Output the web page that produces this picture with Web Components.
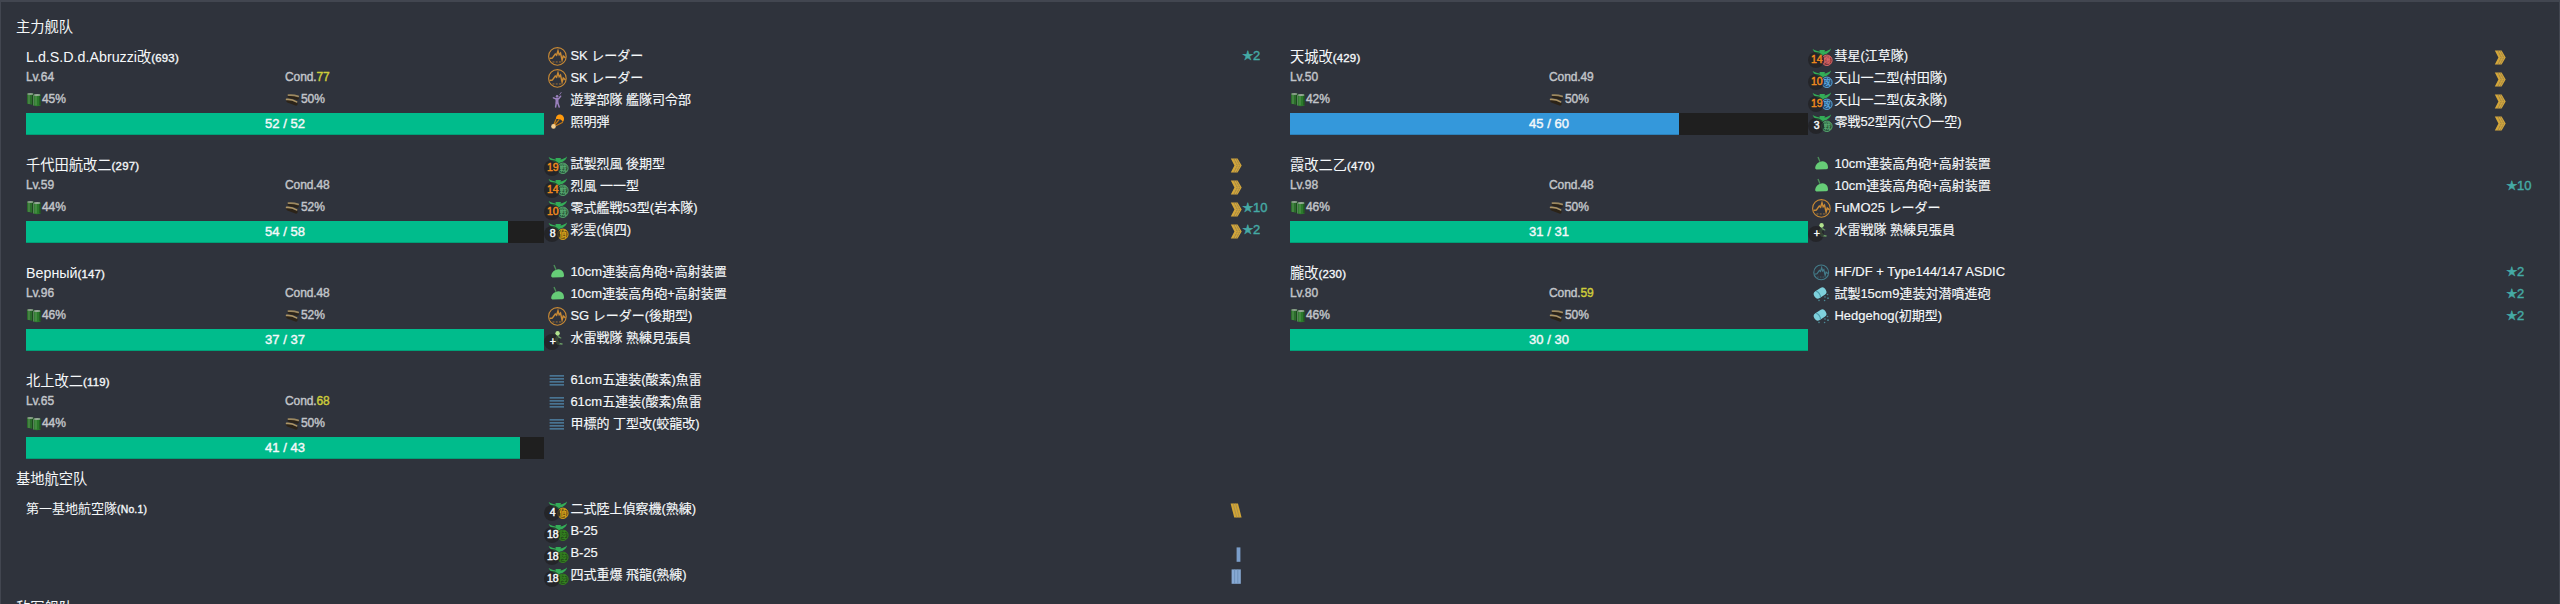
<!DOCTYPE html>
<html lang="ja">
<head>
<meta charset="utf-8">
<title>Fleet</title>
<style>
html,body{margin:0;height:604px;overflow:hidden;background:#2f333c}
body{font-family:"Liberation Sans","Noto Sans CJK JP",sans-serif;color:#f5f8fa}
</style>
</head>
<body>
<fleet-report></fleet-report>
<script>
const tpl = (html) => { const t = document.createElement('template'); t.innerHTML = html; return t; };
class Base extends HTMLElement {
  mount(html) {
    if (this.shadowRoot) return;
    this.attachShadow({ mode: 'open' }).appendChild(tpl(html).content.cloneNode(true));
  }
}

/* Equipment glyphs, drawn in a 26x22 box */
const radar = (c, cx, r) => `<g fill="none" stroke="${c}"><circle cx="${cx}" cy="11.4" r="${r}" stroke-width="1.1"/><g transform="translate(${cx} 11.3) scale(${r / 9})"><path d="M-8 2.2L-5.2 1.8L-2.2-2.4L-.8-1.2L.6-5.6L1.8-1.5L3.2-3.2L4.8 3.8L6-.2L8.3 1.6" stroke-width="1.5"/><path d="M-5 5.8h10" stroke-width="1" stroke-dasharray="2 1.3" opacity=".75"/></g></g>`;
const plane = `<path d="M4.6 4C7 5.7 10 6.4 12 6.5L11.4 5H17L16.4 6.5C18.6 6.2 21 5.2 23 3.4C22.5 6.6 19 9 16.2 9.5L14.3 11H13.5L12 9.5C8.4 9 5.6 6.6 4.6 4Z" fill="#33ad57"/>`;
const ring = (c, ch, f) => `<circle cx="18.9" cy="15.3" r="5.2" fill="${f}" stroke="${c}" stroke-width="1"/><text x="19" y="18.1" text-anchor="middle" font-size="7.5" font-weight="700" fill="${c}">${ch}</text>`;
const ICONS = {
  radar: radar('#c98a35', 13.4, 8.8),
  sonar: radar('#437c8a', 13.2, 7.4),
  fighter: plane + ring('#58a870', '戦', '#24503a'),
  bomber: plane + ring('#e0686a', '爆', '#6b3238'),
  torpedo: plane + ring('#5aa5dc', '攻', '#264c70'),
  recon: plane + ring('#d9a41b', '偵', '#6b5416'),
  land: plane + ring('#35851f', '陸', '#24501c'),
  commander: `<g stroke="#9a80bd" fill="none" stroke-linecap="round"><circle cx="13.1" cy="7.2" r="1.3" fill="#9a80bd" stroke="none"/><path d="M9.4 8.9L11.5 9.8H14.6L16.6 7.2" stroke-width="1.5"/><path d="M13 10V13.5" stroke-width="3"/><path d="M12.3 14L11.6 18M13.8 14L15.2 18" stroke-width="1.5"/><path d="M15.8 5.4L17.2 3.4" stroke-width=".8"/></g>`,
  flare: `<path d="M12 8.2C11.5 4.5 15 2.7 17.7 4C20.5 5.4 20.7 8.9 18.8 11.2C18.3 9.7 17 8.6 15.3 8.3C14 8 12.8 8 12 8.2Z" fill="#ff9a0d"/><path d="M12 8.2L9.7 14M15.3 8.3L10.6 14M18.8 11.2L11.5 15" stroke="#c57814" stroke-width="1.2"/><circle cx="9.5" cy="15.4" r="2.3" fill="#f5cf91"/>`,
  aagun: `<path d="M7.2 14.6C7.6 11.5 10.5 8.4 14.5 8.2C18.6 8.6 20.3 11.6 20 15.2C19.2 16.2 18 16.4 17 16.2L8.4 16.4C7.4 16.3 7.1 15.6 7.2 14.6Z" fill="#66cc77"/><path d="M12 8.8L10 4" stroke="#4d9159" stroke-width="1.3"/>`,
  torp: `<g stroke="#538bb0" stroke-width="1.4"><path d="M5.6 6.9H20M5.6 9.9H20M5.6 12.9H20M5.6 15.9H20"/></g>`,
  depth: `<g transform="rotate(-33 11.8 10)"><rect x="5.5" y="6.2" width="13" height="8" rx="3.5" fill="#7ed0dc"/><path d="M9.8 6.5C11.5 8 11.5 12.5 9.8 14" stroke="#4a99a8" fill="none"/></g><g fill="#4b8996"><circle cx="19.5" cy="11.5" r=".8"/><circle cx="17" cy="14" r=".8"/><circle cx="20" cy="15.2" r=".9"/><circle cx="16.6" cy="17.5" r=".8"/><circle cx="11" cy="17.4" r=".8"/></g>`,
  lookout: `<g fill="none" stroke="#6a9c65" stroke-linecap="round"><path d="M13.8 9.6L12 13.5L14.5 16.5" stroke-width="3.2"/><path d="M14.2 9.8L16.8 11" stroke-width="1.2"/><path d="M14.8 16.5L18 17" stroke-width="1.4"/></g><circle cx="13.6" cy="6.2" r="2.2" fill="#b2e28e"/>`
};
class EquipIcon extends Base {
  connectedCallback() {
    const k = this.getAttribute('kind'), n = this.getAttribute('count');
    const badge = n ? `<b class="${+n > 9 && this.hasAttribute('hot') ? 'hot' : ''}">${n}</b>` : '';
    this.mount(`<style>:host{display:block;position:relative;width:26px;height:22px;flex:none}
      svg{display:block;overflow:visible;font-family:"Noto Sans CJK JP"}
      b{position:absolute;left:0;top:7px;width:16px;height:16px;border-radius:8px;background:rgba(32,32,34,.72);color:#f5f8fa;font:400 10.5px/15px "Liberation Sans",sans-serif;text-align:center;text-indent:1.5px;-webkit-text-stroke:.45px}
      .hot{color:#f08a1d}</style><svg width="26" height="22" viewBox="0 0 26 22">${ICONS[k]}</svg>${badge}`);
  }
}
customElements.define('equip-icon', EquipIcon);

const ALV = {
  7: '<path d="M.8 .4H7.6L11.7 7.5L7.6 14.6H.8L4.4 7.5Z" fill="#d3a63a"/><g fill="none" stroke="#8d7a4b" stroke-width=".8"><path d="M3.9 .8L7.4 7.5L3.9 14.2M6.3 .8L9.7 7.5L6.3 14.2" stroke-dasharray="2 .6"/></g>',
  6: '<path d="M.6 .4H8L11.6 14.6H4.2Z" fill="#d3a635"/><path d="M3.2 .6L6.7 14.4M5.6 .6L9.2 14.4" stroke="#a58b4c" stroke-width=".8"/>',
  3: '<rect x="1.6" y=".4" width="9.2" height="14.4" fill="#87a9d3"/><path d="M4.6 .5V14.7M7.8 .5V14.7" stroke="#688bb5" stroke-width=".8"/>',
  1: '<rect x="6.6" y=".4" width="3.8" height="14.4" fill="#7a9dc9"/>'
};
class EquipRow extends Base {
  connectedCallback() {
    const a = (n) => this.getAttribute(n);
    this.mount(`<style>:host{display:flex;height:22px;align-items:flex-start}
      .n{flex:1;padding-left:.4px;font-size:13px;line-height:22px;white-space:nowrap;-webkit-text-stroke:.15px}
      .a{width:12px;height:15px;margin:4.5px .5px 0 0}
      .s{width:27.5px;font:400 13px/21px "Liberation Sans",sans-serif;color:#45aaa5;white-space:nowrap;-webkit-text-stroke:.4px}
      i{font:13px/1 "DejaVu Sans",sans-serif;margin:0 -.6px 0 -.6px}
      svg{display:block;overflow:visible}</style>
      <equip-icon kind="${a('kind')}" ${a('count') ? `count="${a('count')}"` : ''} ${this.hasAttribute('hot') ? 'hot' : ''}></equip-icon>
      <div class="n"><slot></slot></div>
      <div class="a">${a('alv') ? `<svg width="12" height="15" viewBox="0 0 12 15">${ALV[a('alv')]}</svg>` : ''}</div>
      <div class="s">${a('star') ? `<i>★</i>${a('star')}` : ''}</div>`);
  }
}
customElements.define('equip-row', EquipRow);

class HpBar extends Base {
  connectedCallback() {
    const n = +this.getAttribute('now'), m = +this.getAttribute('max'), p = n / m * 100;
    this.mount(`<style>:host{display:grid;height:22px;background:#1f1f1f;color:#f5f8fa}
      .f,.t{grid-area:1/1}
      .f{width:${p}%;background:${p > 75 ? '#00bc8c' : '#3498db'};box-shadow:inset 0 -1px rgba(0,0,0,.15)}
      .t{font-size:13px;line-height:21px;text-align:center;-webkit-text-stroke:.4px}</style>
      <div class="f"></div><div class="t">${n} / ${m}</div>`);
  }
}
customElements.define('hp-bar', HpBar);

class ShipStats extends Base {
  connectedCallback() {
    const a = (n) => this.getAttribute(n);
    this.mount(`<style>:host{display:grid;grid-template-columns:1fr 1fr;grid-auto-rows:22px;font-size:12px;line-height:22px;color:#c2c5ca;letter-spacing:-.1px;-webkit-text-stroke:.4px}
      div{display:flex;white-space:pre}b{font-weight:400;color:#cfcd3a}svg{display:block;margin:4px 1px 0 0}</style>
      <div>Lv.${a('lv')}</div><div>Cond.${+a('cond') > 49 ? `<b>${a('cond')}</b>` : a('cond')}</div>
      <div><svg width="15" height="15" viewBox="0 0 15 15"><path d="M1 1.5H7.6V13L1 11.8Z" fill="#2b6d2b"/><path d="M7.8 2.6H14.6V13.4Q11 14.8 7.8 13.8Z" fill="#2b7a2b"/><path d="M3 2.5V12M10 4V13.4" stroke="#5c9a58" stroke-width="1"/><path d="M6.6 3V13M14 4V13" stroke="#1c451f"/><path d="M7.7 3V13.6" stroke="#7da07d" stroke-width=".7"/><ellipse cx="4.3" cy="2" rx="3.1" ry="1" fill="#8d9f8d"/><ellipse cx="11.2" cy="3" rx="3.2" ry="1.1" fill="#98a998"/></svg>${a('fuel')}%</div>
      <div><svg width="15" height="15" viewBox="0 0 15 15"><g stroke-linecap="round"><path d="M4.3 4.3L12.3 6M3 9L11 12" stroke="#2b2318" stroke-width="3.4"/><path d="M3.4 3.2Q8 2.6 13.2 4.4" fill="none" stroke="#9c8860" stroke-width="1.7"/><path d="M1.6 7.4Q7 7 11.6 9.9" fill="none" stroke="#ad9565" stroke-width="1.7"/></g></svg>${a('ammo')}%</div>`);
  }
}
customElements.define('ship-stats', ShipStats);

class ShipCard extends Base {
  connectedCallback() {
    this.mount(`<style>:host{display:flex;box-sizing:border-box;width:1264px;height:108px;padding:0 10px}
      .i{width:518px;padding-top:2px}.e{flex:1}
      .n{height:19px;font-size:14.28px;line-height:21px;white-space:nowrap}
      .n span{font-size:11.4px;letter-spacing:.2px;-webkit-text-stroke:.35px}
      :host([base]) .i{padding-top:1px}
      :host([base]) .e{padding-top:1px}
      :host([base]) .n{font-size:13px;line-height:21px}
      :host([base]) .n span{font-size:10.4px}</style>
      <div class="i"><div class="n"><slot name="name"></slot><span>(<slot name="id"></slot>)</span></div><slot name="info"></slot></div>
      <div class="e"><slot></slot></div>`);
  }
}
customElements.define('ship-card', ShipCard);

class FleetSection extends Base {
  connectedCallback() {
    this.mount(`<style>:host{display:block;padding:0 16px}
      .h{font-size:14.28px;line-height:22px;height:22px;margin-bottom:7px}
      .g{display:grid;grid-template-columns:1264px 1264px}</style>
      <div class="h"><slot name="title"></slot></div><div class="g"><slot></slot></div>`);
  }
}
customElements.define('fleet-section', FleetSection);

const AA = 'aagun||||10cm連装高角砲+高射装置';
const fleet = [
  ['L.d.S.D.d.Abruzzi改', 693, 64, 77, 45, 50, 52, 52, ['radar||||SK レーダー|2', 'radar||||SK レーダー', 'commander||||遊撃部隊 艦隊司令部', 'flare||||照明弾']],
  ['天城改', 429, 50, 49, 42, 50, 45, 60, ['bomber|14|1|7|彗星(江草隊)', 'torpedo|10|1|7|天山一二型(村田隊)', 'torpedo|19|1|7|天山一二型(友永隊)', 'fighter|3||7|零戦52型丙(六〇一空)']],
  ['千代田航改二', 297, 59, 48, 44, 52, 54, 58, ['fighter|19|1|7|試製烈風 後期型', 'fighter|14|1|7|烈風 一一型', 'fighter|10|1|7|零式艦戦53型(岩本隊)|10', 'recon|8||7|彩雲(偵四)|2']],
  ['霞改二乙', 470, 98, 48, 46, 50, 31, 31, [AA, AA + '|10', 'radar||||FuMO25 レーダー', 'lookout|+|||水雷戦隊 熟練見張員']],
  ['Верный', 147, 96, 48, 46, 52, 37, 37, [AA, AA, 'radar||||SG レーダー(後期型)', 'lookout|+|||水雷戦隊 熟練見張員']],
  ['朧改', 230, 80, 59, 46, 50, 30, 30, ['sonar||||HF/DF + Type144/147 ASDIC|2', 'depth||||試製15cm9連装対潜噴進砲|2', 'depth||||Hedgehog(初期型)|2']],
  ['北上改二', 119, 65, 68, 44, 50, 41, 43, ['torp||||61cm五連装(酸素)魚雷', 'torp||||61cm五連装(酸素)魚雷', 'torp||||甲標的 丁型改(蛟龍改)']]
];
const lbas = ['recon|4||6|二式陸上偵察機(熟練)', 'land|18|||B-25', 'land|18||1|B-25', 'land|18||3|四式重爆 飛龍(熟練)'];
const row = (s) => {
  const [k, c, h, v, n, st] = s.split('|');
  return `<equip-row kind="${k}" ${c ? `count="${c}"` : ''} ${h ? 'hot' : ''} ${v ? `alv="${v}"` : ''} ${st ? `star="${st}"` : ''}>${n}</equip-row>`;
};
const card = ([n, id, lv, cond, fuel, ammo, hp, max, eq]) =>
  `<ship-card><span slot="name">${n}</span><span slot="id">${id}</span><div slot="info"><ship-stats lv="${lv}" cond="${cond}" fuel="${fuel}" ammo="${ammo}"></ship-stats><hp-bar now="${hp}" max="${max}"></hp-bar></div>${eq.map(row).join('')}</ship-card>`;

class FleetReport extends Base {
  connectedCallback() {
    this.mount(`<style>:host{display:block;box-sizing:border-box;width:2560px;height:604px;overflow:hidden;border:solid #424650;border-width:2px 1px 0 1px;padding-top:14px}
      fleet-section{margin-left:-1px;margin-right:-1px}
      .b{margin-top:-9px}.c{margin-top:-8px}hp-bar{margin-top:3px}</style>
      <fleet-section><span slot="title" lang="zh-CN">主力舰队</span>${fleet.map(card).join('')}</fleet-section>
      <fleet-section class="b"><span slot="title" lang="zh-CN">基地航空队</span><ship-card base><span slot="name">第一基地航空隊</span><span slot="id">No.1</span>${lbas.map(row).join('')}</ship-card></fleet-section>
      <fleet-section class="c"><span slot="title" lang="zh-CN">敌军舰队</span></fleet-section>`);
  }
}
customElements.define('fleet-report', FleetReport);
</script>
</body>
</html>
